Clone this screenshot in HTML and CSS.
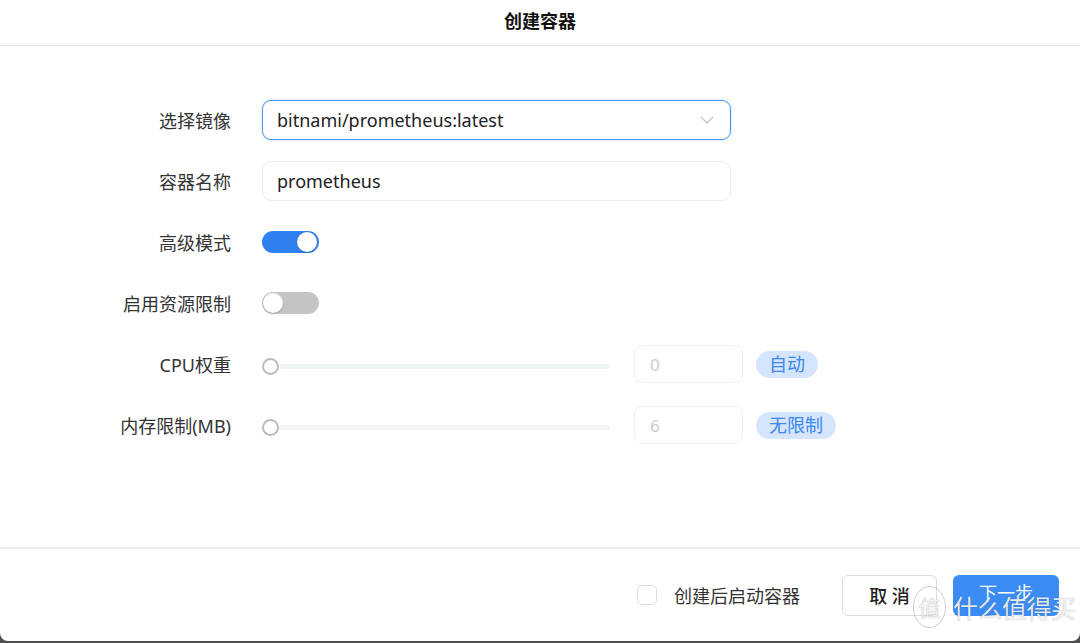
FILE: index.html
```html
<!DOCTYPE html>
<html lang="zh-CN">
<head>
  <meta charset="UTF-8" />
  <title>创建容器</title>
  <link rel="stylesheet" href="styles.css">
</head>
<body>
  <div class="dialog">
    <!-- En-tête -->
    <div class="dialog-header">创建容器</div>

    <!-- Formulaire -->
    <div class="dialog-body">
      <div class="row">
        <label class="row-label">选择镜像</label>
        <div class="select select-focus">
          <span>bitnami/prometheus:latest</span>
          <svg class="chevron" width="14" height="9" viewBox="0 0 14 9"><path d="M1 1l6 6 6-6" fill="none" stroke="#c2c6cc" stroke-width="1.3"/></svg>
        </div>
      </div>

      <div class="row">
        <label class="row-label">容器名称</label>
        <div class="select">prometheus</div>
      </div>

      <div class="row">
        <label class="row-label">高级模式</label>
        <div class="toggle on"><span class="knob"></span></div>
      </div>

      <div class="row">
        <label class="row-label">启用资源限制</label>
        <div class="toggle"><span class="knob"></span></div>
      </div>

      <div class="row">
        <label class="row-label">CPU权重</label>
        <div class="slider"><span class="slider-knob"></span><span class="slider-track"></span></div>
        <div class="num-input">0</div>
        <span class="tag">自动</span>
      </div>

      <div class="row">
        <label class="row-label">内存限制(MB)</label>
        <div class="slider"><span class="slider-knob"></span><span class="slider-track"></span></div>
        <div class="num-input">6</div>
        <span class="tag">无限制</span>
      </div>
    </div>

    <!-- Pied -->
    <div class="dialog-footer">
      <label class="check"><span class="check-box"></span>创建后启动容器</label>
      <button class="btn btn-cancel">取 消</button>
      <button class="btn btn-primary">下一步</button>
    </div>

    <div class="watermark">
      <span class="wm-logo">值</span>
      <span class="wm-text">什么值得买</span>
    </div>
  </div>
</body>
</html>
```

FILE: styles.css
```css
/* Base */
* {
  box-sizing: border-box;
  margin: 0;
  padding: 0;
}
body {
  width: 1080px;
  height: 643px;
  overflow: hidden;
  background: #505050;
  font-family: "Noto Sans", "Noto Sans CJK SC", sans-serif;
  color: #333;
}

.dialog {
  position: relative;
  height: 641px;
  background: #fff;
  border-radius: 0 0 8px 8px;
  display: flex;
  flex-direction: column;
}

/* En-tête */
.dialog-header {
  height: 46px;
  border-bottom: 1px solid #e6e6e6;
  text-align: center;
  font-size: 18px;
  font-weight: 700;
  line-height: 42px;
  color: #111;
}

/* Corps */
.dialog-body {
  flex: 1;
  padding-top: 54px;
  border-bottom: 2px solid #ececec;
}
.row {
  display: flex;
  align-items: center;
  height: 40px;
  margin-bottom: 21px;
}
.row-label {
  width: 231px;
  margin-right: 31px;
  text-align: right;
  font-size: 18px;
  color: #333;
}
.select {
  width: 469px;
  height: 40px;
  border: 1px solid #ececec;
  border-radius: 9px;
  padding: 0 14px;
  display: flex;
  align-items: center;
  justify-content: space-between;
  font-size: 18px;
  color: #222;
}
.select-focus {
  border: 1.5px solid #4b93f5;
  box-shadow: 0 0 2px rgba(75, 147, 245, 0.5);
}
.chevron {
  margin-right: 2px;
}

/* Interrupteurs */
.toggle {
  width: 57px;
  height: 22px;
  border-radius: 11px;
  background: #c4c4c4;
  padding: 1px;
  display: flex;
}
.toggle .knob {
  width: 20px;
  height: 20px;
  border-radius: 50%;
  background: #fff;
  box-shadow: 0 1px 2px rgba(0, 0, 0, 0.2);
}
.toggle.on {
  background: #2f80f0;
  justify-content: flex-end;
  padding-right: 2px;
}

/* Curseurs */
.slider {
  width: 348px;
  display: flex;
  align-items: center;
  margin-top: 4px;
  margin-right: 24px;
}
.slider-knob {
  width: 17px;
  height: 17px;
  border-radius: 50%;
  border: 2.5px solid #bdbdbd;
  background: #fff;
  flex-shrink: 0;
}
.slider-track {
  flex: 1;
  height: 5px;
  background: #f1f4f5;
  border-radius: 2px;
}
.num-input {
  width: 109px;
  height: 38px;
  border: 1px solid #f0f0f0;
  border-radius: 8px;
  padding: 0 15px;
  display: flex;
  align-items: center;
  font-size: 17px;
  color: #c8ccd2;
  margin-right: 13px;
}
.tag {
  height: 27px;
  padding: 0 13px;
  border-radius: 14px;
  background: #d5e5fd;
  color: #3b86ef;
  font-size: 18px;
  line-height: 27px;
}

/* Pied */
.dialog-footer {
  height: 92px;
  display: flex;
  align-items: center;
  justify-content: flex-end;
  padding-right: 21px;
}
.check {
  display: flex;
  align-items: center;
  font-size: 18px;
  color: #333;
  margin-right: 42px;
}
.check-box {
  width: 20px;
  height: 20px;
  border: 1px solid #dcdcdc;
  border-radius: 5px;
  margin-right: 17px;
}
.btn {
  height: 41px;
  border-radius: 6px;
  font-family: inherit;
  font-size: 18px;
  cursor: pointer;
}
.btn-cancel {
  width: 95px;
  background: #fff;
  border: 1px solid #dcdcdc;
  color: #222;
  font-weight: 500;
  margin-right: 16px;
}
.btn-primary {
  width: 106px;
  background: #3b8cf5;
  border: none;
  color: #fff;
  padding-bottom: 6px;
}

/* Filigrane */
.watermark {
  position: absolute;
  left: 913px;
  top: 586px;
  display: flex;
  align-items: center;
  pointer-events: none;
}
.wm-logo {
  width: 33px;
  height: 42px;
  border: 1px solid rgba(160, 160, 160, 0.5);
  border-radius: 50%;
  font-size: 22px;
  line-height: 40px;
  text-align: center;
  color: rgba(255, 255, 255, 0.9);
  text-shadow: 0 0 1px rgba(0, 0, 0, 0.45);
  margin-right: 7px;
}
.wm-text {
  font-size: 25px;
  color: rgba(255, 255, 255, 0.9);
  text-shadow: 0 0 1px rgba(0, 0, 0, 0.45);
  letter-spacing: -0.5px;
}
```
